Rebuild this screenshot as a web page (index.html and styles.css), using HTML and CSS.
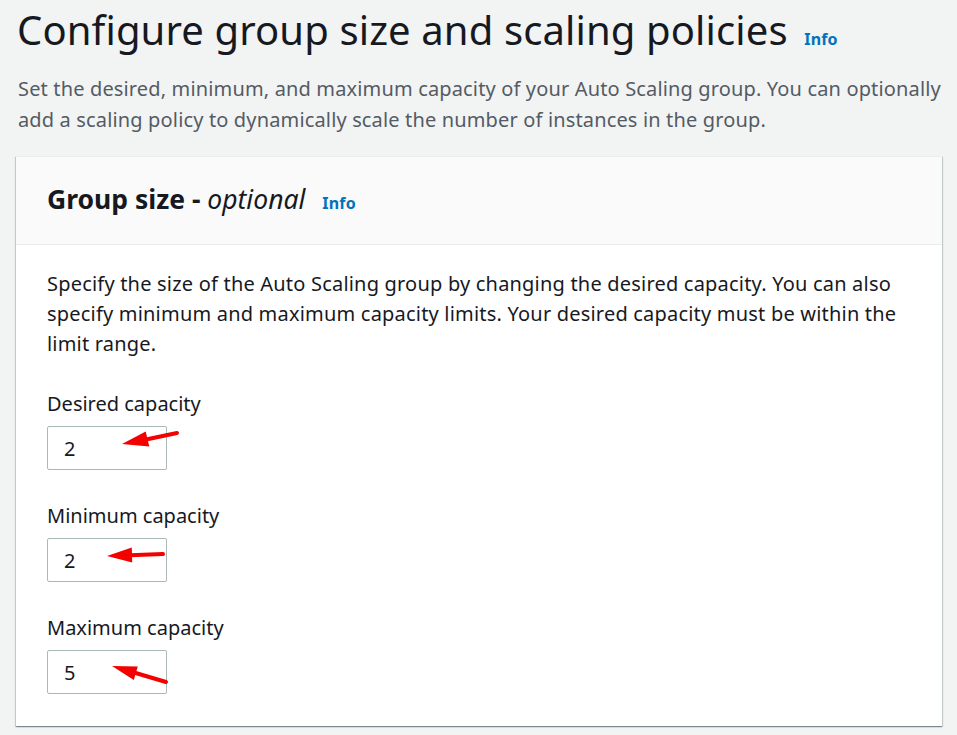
FILE: index.html
```html
<!DOCTYPE html>
<html lang="en">
<head>
<meta charset="utf-8">
<title>Configure group size and scaling policies</title>
<link rel="stylesheet" href="styles.css">
</head>
<body>
<div class="page">
  <h1 class="title">Configure group size and scaling policies <a class="info info-lg" href="#">Info</a></h1>
  <p class="desc">Set the desired, minimum, and maximum capacity of your Auto Scaling group. You can optionally add a scaling policy to dynamically scale the number of instances in the group.</p>

  <section class="card">
    <header class="card-head">
      <h2 class="card-title">Group size - <em>optional</em> <a class="info" href="#">Info</a></h2>
    </header>
    <div class="card-body">
      <p class="help">Specify the size of the Auto Scaling group by changing the desired capacity. You can also specify minimum and maximum capacity limits. Your desired capacity must be within the limit range.</p>
      <div class="field">
        <label class="label" for="desired">Desired capacity</label>
        <input class="input" id="desired" type="text" value="2">
      </div>
      <div class="field">
        <label class="label" for="min">Minimum capacity</label>
        <input class="input" id="min" type="text" value="2">
      </div>
      <div class="field">
        <label class="label" for="max">Maximum capacity</label>
        <input class="input" id="max" type="text" value="5">
      </div>
    </div>
  </section>

  <svg class="arrows" width="957" height="735" viewBox="0 0 957 735" aria-hidden="true">
    <g stroke="#f40000" stroke-width="4" stroke-linecap="round" fill="none">
      <line x1="177" y1="433" x2="146" y2="439.5"/>
      <line x1="163" y1="554" x2="130" y2="555.2"/>
      <line x1="166" y1="682" x2="134" y2="672.5"/>
    </g>
    <g fill="#f40000">
      <polygon points="122,444 149.3,446.6 145.7,431.4"/>
      <polygon points="107,556 132.2,562.5 131.8,547.5"/>
      <polygon points="112,666 137.8,666.5 133.8,679.9"/>
    </g>
  </svg>
</div>
</body>
</html>
```

FILE: styles.css
```css
html, body {
  margin: 0;
  padding: 0;
  background: #f2f3f3;
}

body {
  font-family: "Noto Sans", "Open Sans", Arial, sans-serif;
  color: #16191f;
}

.page {
  position: relative;
  width: 957px;
  height: 735px;
  overflow: hidden;
  padding: 0 15px 0 16px;
  box-sizing: border-box;
}

.title {
  margin: 0;
  padding-top: 4px;
  padding-left: 1px;
  font-size: 40px;
  font-weight: 400;
  line-height: 52px;
  letter-spacing: 0.12px;
  color: #16191f;
}

.info {
  color: #0073bb;
  font-weight: 700;
  font-size: 16px;
  text-decoration: none;
  letter-spacing: 0.2px;
  margin-left: 4px;
}

.title .info {
  margin-left: 6px;
}

.desc {
  margin: 8px 0 0 2px;
  font-size: 20px;
  line-height: 31px;
  letter-spacing: 0.15px;
  color: #545b64;
}

.card {
  margin-top: 21px;
  background: #fff;
  box-shadow: 0 1px 1px 0 rgba(0, 28, 36, 0.3), 1px 1px 1px 0 rgba(0, 28, 36, 0.15), -1px 1px 1px 0 rgba(0, 28, 36, 0.15);
  border-top: 1px solid #eaeded;
}

.card-head {
  background: #fafafa;
  border-bottom: 1px solid #eaeded;
  height: 87px;
  display: flex;
  align-items: center;
  padding: 0 31px;
}

.card-title {
  margin: 0;
  font-size: 26.5px;
  font-weight: 700;
  line-height: 30px;
}

.card-title em {
  font-weight: 400;
  font-style: italic;
}

.card-title .info {
  margin-left: 10px;
}

.card-body {
  padding: 24px 31px 32px;
}

.help {
  margin: 0;
  font-size: 20px;
  line-height: 30px;
  letter-spacing: 0.2px;
  color: #16191f;
}

.field {
  display: flex;
  flex-direction: column;
  align-items: flex-start;
  margin-top: 30px;
}

.field + .field {
  margin-top: 31px;
}

.label {
  font-size: 20px;
  line-height: 30px;
  color: #16191f;
}

.input {
  margin-top: 7px;
  box-sizing: border-box;
  width: 120px;
  height: 44px;
  border: 1px solid #aab7b8;
  border-radius: 2px;
  padding: 0 16px;
  font-family: inherit;
  font-size: 20px;
  color: #16191f;
  background: #fff;
}

.arrows {
  position: absolute;
  left: 0;
  top: 0;
  pointer-events: none;
}
```
